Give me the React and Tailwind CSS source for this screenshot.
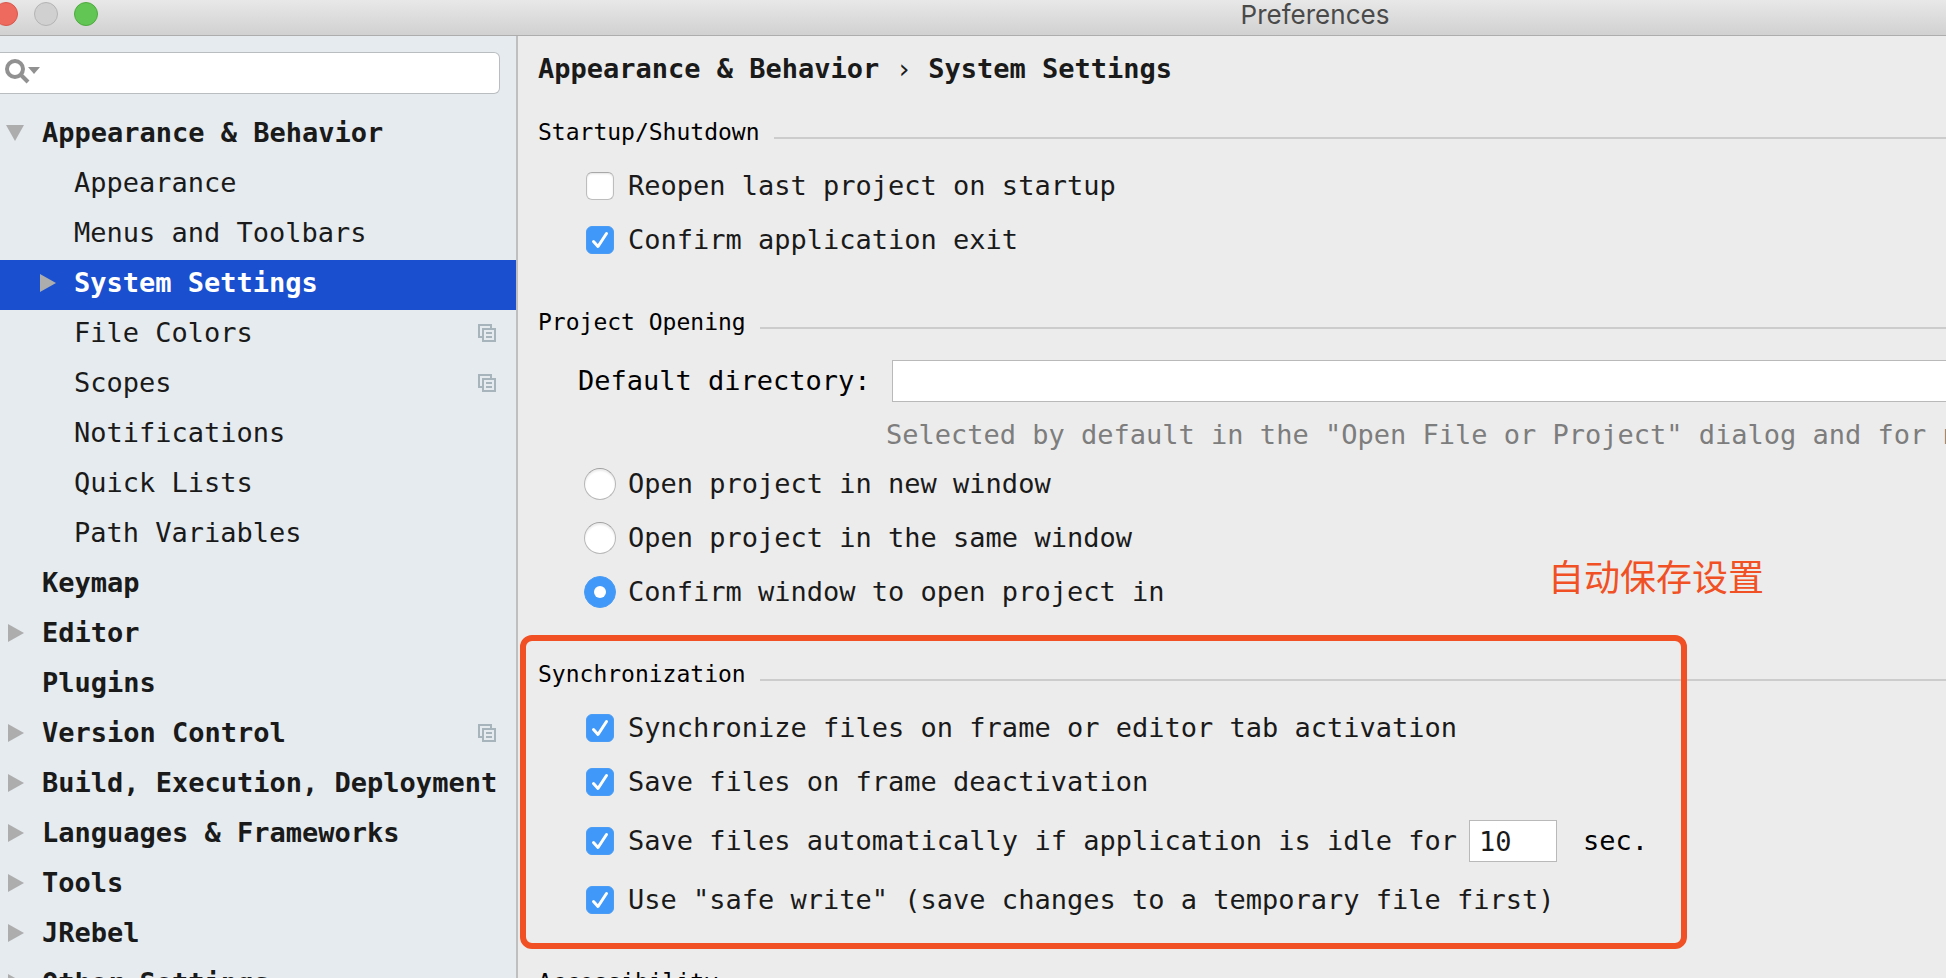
import { useState } from "react";

const treeItems = [
  { label: "Appearance & Behavior", arrow: "down" },
  { label: "Appearance", child: true },
  { label: "Menus and Toolbars", child: true },
  { label: "System Settings", child: true, arrow: "right" },
  { label: "File Colors", child: true, project: true },
  { label: "Scopes", child: true, project: true },
  { label: "Notifications", child: true },
  { label: "Quick Lists", child: true },
  { label: "Path Variables", child: true },
  { label: "Keymap" },
  { label: "Editor", arrow: "right" },
  { label: "Plugins" },
  { label: "Version Control", arrow: "right", project: true },
  { label: "Build, Execution, Deployment", arrow: "right" },
  { label: "Languages & Frameworks", arrow: "right" },
  { label: "Tools", arrow: "right" },
  { label: "JRebel", arrow: "right" },
  { label: "Other Settings", arrow: "right" },
];

const openOptions = [
  "Open project in new window",
  "Open project in the same window",
  "Confirm window to open project in",
];

function Arrow({ direction }) {
  return (
    <svg viewBox="0 0 18 18" className="size-[18px] shrink-0 fill-[#adadad]" aria-hidden="true">
      {direction === "down" && <path d="M0 1h18L9 17z" />}
      {direction === "right" && <path d="M2 0v18L18 9z" />}
    </svg>
  );
}

function ProjectIcon() {
  return (
    <svg viewBox="0 0 18 18" className="size-[18px] shrink-0 fill-none stroke-[#a8b4bc] stroke-2" aria-hidden="true">
      <path d="M4 13H1V1h12v3" />
      <path d="M5 5h12v12H5z" />
      <path d="M8 9h6M8 13h6" />
    </svg>
  );
}

function TreeRow({ item, selected, onSelect }) {
  const weight = !item.child || selected ? "font-bold" : "font-normal";
  const tone = selected ? "bg-[#1a4fd0] text-white" : "text-[#1a1a1a]";

  return (
    <li>
      <button
        onClick={onSelect}
        className={`flex h-[50px] w-full items-center whitespace-nowrap pr-5 pb-1 text-left ${
          item.child ? "pl-[38px]" : "pl-[6px]"
        } ${weight} ${tone}`}
      >
        <Arrow direction={item.arrow} />
        <span className="ml-[18px] flex-1">{item.label}</span>
        {item.project && <ProjectIcon />}
      </button>
    </li>
  );
}

function SectionTitle({ children }) {
  return (
    <div className="flex h-8 items-center gap-[14px] text-[23px] text-black">
      <h2>{children}</h2>
      <div className="mt-3 h-[2px] flex-1 bg-[#cccccc]" />
    </div>
  );
}

function CheckOption({ label, initial = false }) {
  const [checked, setChecked] = useState(initial);

  return (
    <label className="flex h-[54px] items-center gap-[14px] whitespace-nowrap pl-12">
      <span className="grid shrink-0">
        <input
          type="checkbox"
          checked={checked}
          onChange={(event) => setChecked(event.target.checked)}
          className="col-start-1 row-start-1 size-7 appearance-none rounded-md border border-[#bdbdbd] border-t-[#a8a8a8] bg-white shadow-[inset_0_1px_2px_#e4e4e4] checked:border-[#4a9cf5] checked:bg-[#4098f8] checked:shadow-none"
        />
        {checked && (
          <svg
            viewBox="0 0 28 28"
            className="pointer-events-none col-start-1 row-start-1 size-7 fill-none stroke-white stroke-3"
            strokeLinecap="round"
            strokeLinejoin="round"
            aria-hidden="true"
          >
            <path d="M7.5 15.5l4.5 5L20.5 7.5" />
          </svg>
        )}
      </span>
      {label}
    </label>
  );
}

function RadioOption({ label, checked, onChange }) {
  return (
    <label className="flex h-[54px] items-center gap-3 whitespace-nowrap pl-[46px]">
      <span className="grid shrink-0 place-items-center">
        <input
          type="radio"
          name="open-project"
          checked={checked}
          onChange={onChange}
          className="col-start-1 row-start-1 size-8 appearance-none rounded-full border border-[#b8b8b8] border-t-[#a0a0a0] bg-white shadow-[inset_0_2px_2px_#ececec] checked:border-[#4a9cf5] checked:bg-[#4098f8] checked:shadow-none"
        />
        {checked && <span className="pointer-events-none col-start-1 row-start-1 size-3 rounded-full bg-white" />}
      </span>
      {label}
    </label>
  );
}

export default function App() {
  const [selected, setSelected] = useState("System Settings");
  const [openMode, setOpenMode] = useState(openOptions[2]);

  return (
    <div className="flex h-screen flex-col overflow-hidden bg-[#ececec] font-['DejaVu_Sans_Mono',monospace] text-[27px] leading-8 text-[#1a1a1a]">
      <header className="flex h-9 shrink-0 items-center border-b border-[#adadad] bg-linear-to-b from-[#e8e8e8] to-[#d1d1d1]">
        <div className="-ml-[6px] flex gap-4 pb-[7px]">
          <button aria-label="Close" className="size-6 rounded-full border border-[#d9574c] bg-[#ee6a5f]" />
          <button aria-label="Minimize" className="size-6 rounded-full border border-[#b4b4b4] bg-[#d0d0d0]" />
          <button aria-label="Zoom" className="size-6 rounded-full border border-[#4faa3f] bg-[#62c655]" />
        </div>
        <h1 className="flex-1 pb-[5px] pl-[586px] text-center font-['Inter',sans-serif] text-[26px] leading-7 text-[#4a4a4a]">
          Preferences
        </h1>
      </header>

      <div className="flex min-h-0 flex-1">
        <aside className="w-[518px] shrink-0 overflow-hidden border-r-2 border-[#bfbfbf] bg-[#e5ebef]">
          <div className="mt-4 mr-4 flex h-[42px] items-center rounded-r-md border border-l-0 border-[#b9bdc0] bg-white pl-[5px]">
            <svg viewBox="0 0 36 28" className="h-7 w-9 shrink-0" aria-hidden="true">
              <circle cx="10" cy="10" r="8" fill="none" stroke="#919191" strokeWidth="4" />
              <path d="M16 16l7 7" stroke="#919191" strokeWidth="4" />
              <path d="M23 8h12l-6 7z" fill="#919191" />
            </svg>
            <input aria-label="Search settings" className="h-full min-w-0 flex-1 px-2 outline-none" />
          </div>
          <ul className="mt-4">
            {treeItems.map((item) => (
              <TreeRow
                key={item.label}
                item={item}
                selected={selected === item.label}
                onSelect={() => setSelected(item.label)}
              />
            ))}
          </ul>
        </aside>

        <main className="min-w-0 flex-1 overflow-hidden pl-5">
          <nav className="flex h-[66px] items-center whitespace-pre font-bold">
            Appearance & Behavior <span className="font-normal">›</span> System Settings
          </nav>

          <section className="mt-[14px]">
            <SectionTitle>Startup/Shutdown</SectionTitle>
            <div className="mt-[11px]">
              <CheckOption label="Reopen last project on startup" />
              <CheckOption label="Confirm application exit" initial />
            </div>
          </section>

          <section className="relative mt-[39px]">
            <SectionTitle>Project Opening</SectionTitle>
            <div className="mt-[22px] flex items-center pl-10 text-black">
              <label htmlFor="default-directory" className="w-[314px] shrink-0 whitespace-nowrap">
                Default directory:
              </label>
              <input
                id="default-directory"
                className="h-[42px] min-w-0 flex-1 border border-r-0 border-[#b9b9b9] bg-white px-2 outline-none"
              />
            </div>
            <p className="mt-[11px] h-11 whitespace-nowrap pl-[348px] leading-[44px] text-[#7d7d7d]">
              Selected by default in the "Open File or Project" dialog and for new projects
            </p>
            {openOptions.map((option) => (
              <RadioOption
                key={option}
                label={option}
                checked={openMode === option}
                onChange={() => setOpenMode(option)}
              />
            ))}
            <p className="absolute bottom-6 left-[1010px] whitespace-nowrap font-['Noto_Sans_CJK_SC',sans-serif] text-4xl text-[#f05024]">
              自动保存设置
            </p>
          </section>

          <section className="relative mt-[39px]">
            <SectionTitle>Synchronization</SectionTitle>
            <div className="mt-[11px]">
              <CheckOption label="Synchronize files on frame or editor tab activation" initial />
              <CheckOption label="Save files on frame deactivation" initial />
              <div className="flex h-16 items-center">
                <CheckOption label="Save files automatically if application is idle for" initial />
                <input
                  aria-label="Idle seconds"
                  defaultValue="10"
                  className="ml-3 h-[42px] w-[88px] border border-[#b9b9b9] bg-white px-[9px] outline-none"
                />
                <span className="ml-[26px] text-black">sec.</span>
              </div>
              <CheckOption label={'Use "safe write" (save changes to a temporary file first)'} initial />
            </div>
            <div className="pointer-events-none absolute -top-[23px] -left-[18px] h-[314px] w-[1167px] rounded-xl border-6 border-[#f05024]" />
          </section>

          <section className="mt-[39px]">
            <SectionTitle>Accessibility</SectionTitle>
          </section>
        </main>
      </div>
    </div>
  );
}
